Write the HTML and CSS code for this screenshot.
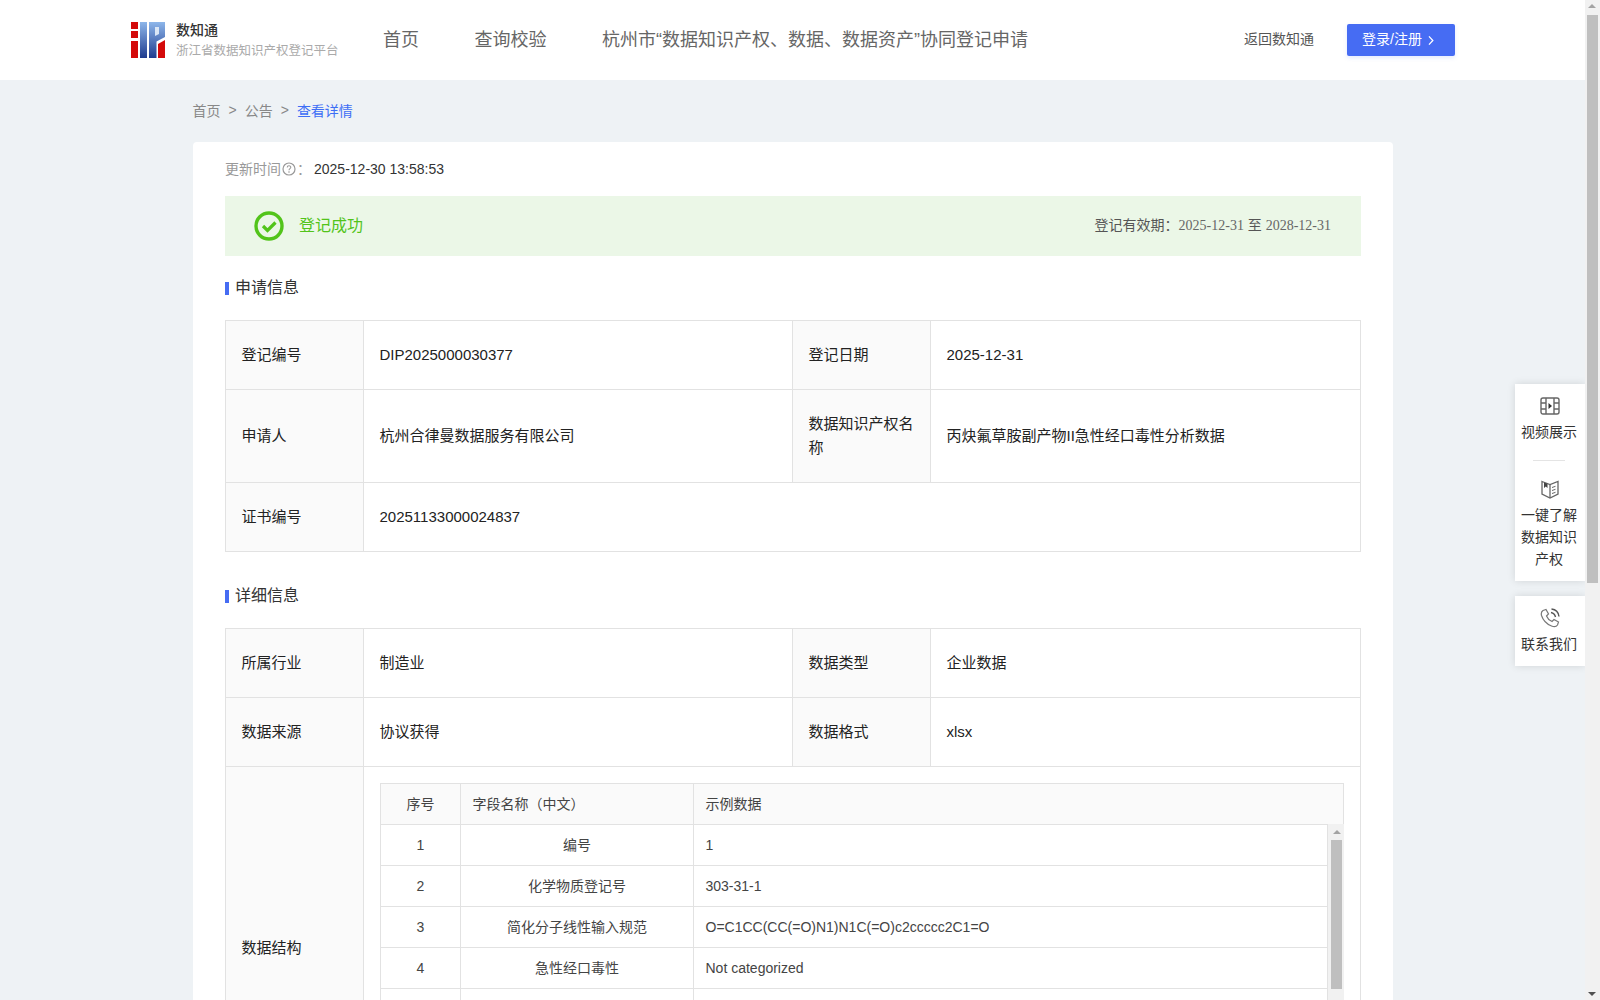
FILE: index.html
```html
<!DOCTYPE html>
<html lang="zh-CN">
<head>
    <meta charset="UTF-8">
    <title>查看详情 - 数知通</title>
    <link rel="stylesheet" href="styles.css">
</head>
<body>
    <div class="page">
        <header class="topbar">
            <div class="brand">
                <svg class="logo" viewBox="0 0 34 36" width="34" height="36">
                    <defs>
                        <linearGradient id="logoBlue" x1="0" y1="0" x2="0" y2="1">
                            <stop offset="0" stop-color="#8db6ea"/>
                            <stop offset="1" stop-color="#1f3c8f"/>
                        </linearGradient>
                    </defs>
                    <rect x="0" y="0" width="7" height="7" fill="#d40a0a"/>
                    <rect x="0" y="9" width="7" height="7" fill="#d40a0a"/>
                    <rect x="0" y="19" width="7" height="17" fill="#d40a0a"/>
                    <rect x="9" y="0" width="7" height="36" fill="url(#logoBlue)"/>
                    <path d="M18 0H34V15L25.5 19.5V36H18Z" fill="url(#logoBlue)"/>
                    <path d="M24 5V14L28 12V5Z" fill="#dbe7f6"/>
                    <path d="M27 22L34 18V36H27Z" fill="#d40a0a"/>
                </svg>
                <div class="brand-text">
                    <div class="brand-name">数知通</div>
                    <div class="brand-sub">浙江省数据知识产权登记平台</div>
                </div>
            </div>
            <nav class="nav">
                <a>首页</a>
                <a>查询校验</a>
                <a>杭州市“数据知识产权、数据、数据资产”协同登记申请</a>
            </nav>
            <a class="back-link">返回数知通</a>
            <button class="login-btn">登录/注册
                <svg viewBox="0 0 6 12" width="6" height="11"><path d="M.8 1.5L5 6L.8 10.5" fill="none" stroke="#fff" stroke-width="1.4"/></svg>
            </button>
        </header>

        <main class="content">
            <div class="breadcrumb">
                <span>首页</span><i>&gt;</i><span>公告</span><i>&gt;</i><span class="current">查看详情</span>
            </div>

            <section class="card">
                <div class="update-time">
                    <span class="label">更新时间</span>
                    <svg viewBox="0 0 14 14" width="14" height="14"><circle cx="7" cy="7" r="6" fill="none" stroke="#999" stroke-width="1.2"/><path d="M5.2 5.4C5.2 3.2 8.8 3.2 8.8 5.3C8.8 6.6 7 6.6 7 8.2" fill="none" stroke="#999" stroke-width="1.1"/><circle cx="7" cy="10" r=".8" fill="#999"/></svg>
                    <span class="label">：</span>
                    <span class="time">2025-12-30 13:58:53</span>
                </div>

                <div class="status">
                    <svg viewBox="0 0 30 30" width="30" height="30"><circle cx="15" cy="15" r="13" fill="none" stroke="#52c41a" stroke-width="3.4"/><path d="M9 15L13.5 19.5L21.5 11.5" fill="none" stroke="#52c41a" stroke-width="3.2"/></svg>
                    <span class="status-text">登记成功</span>
                    <span class="status-period">登记有效期：<em>2025-12-31</em> 至 <em>2028-12-31</em></span>
                </div>

                <h3 class="sec-title">申请信息</h3>
                <table class="info">
                    <colgroup><col class="c1"><col class="c2"><col class="c3"><col class="c4"></colgroup>
                    <tr>
                        <th>登记编号</th><td>DIP2025000030377</td>
                        <th>登记日期</th><td>2025-12-31</td>
                    </tr>
                    <tr>
                        <th>申请人</th><td>杭州合律曼数据服务有限公司</td>
                        <th>数据知识产权名称</th><td>丙炔氟草胺副产物II急性经口毒性分析数据</td>
                    </tr>
                    <tr>
                        <th>证书编号</th><td colspan="3">20251133000024837</td>
                    </tr>
                </table>

                <h3 class="sec-title">详细信息</h3>
                <table class="info">
                    <colgroup><col class="c1"><col class="c2"><col class="c3"><col class="c4"></colgroup>
                    <tr>
                        <th>所属行业</th><td>制造业</td>
                        <th>数据类型</th><td>企业数据</td>
                    </tr>
                    <tr>
                        <th>数据来源</th><td>协议获得</td>
                        <th>数据格式</th><td>xlsx</td>
                    </tr>
                    <tr>
                        <th>数据结构</th>
                        <td colspan="3" class="struct-cell">
                            <table class="fields fields-head">
                                <colgroup><col class="f1"><col class="f2"><col></colgroup>
                                <tr><th>序号</th><th>字段名称（中文）</th><th>示例数据</th></tr>
                            </table>
                            <div class="fields-body">
                                <table class="fields">
                                    <colgroup><col class="f1"><col class="f2"><col></colgroup>
                                    <tr><td class="mid">1</td><td class="mid">编号</td><td>1</td></tr>
                                    <tr><td class="mid">2</td><td class="mid">化学物质登记号</td><td>303-31-1</td></tr>
                                    <tr><td class="mid">3</td><td class="mid">简化分子线性输入规范</td><td>O=C1CC(CC(=O)N1)N1C(=O)c2ccccc2C1=O</td></tr>
                                    <tr><td class="mid">4</td><td class="mid">急性经口毒性</td><td>Not categorized</td></tr>
                                    <tr><td class="mid"></td><td class="mid"></td><td></td></tr>
                                </table>
                                <div class="mini-scroll">
                                    <span class="arrow-up"></span>
                                    <span class="mini-thumb"></span>
                                </div>
                            </div>
                        </td>
                    </tr>
                </table>
            </section>

            <aside class="float-tools">
                <div class="tool-box">
                    <div class="tool">
                        <svg viewBox="0 0 20 20" width="20" height="20" fill="none" stroke="#666" stroke-width="1.4">
                            <rect x="1" y="2" width="18" height="16" rx="2"/>
                            <path d="M6 2V18M14 2V18M1 7H6M1 13H6M14 7H19M14 13H19"/>
                            <path d="M8.5 7L12 10L8.5 13Z" fill="#333" stroke="none"/>
                        </svg>
                        <span>视频展示</span>
                    </div>
                    <div class="tool-line"></div>
                    <div class="tool">
                        <svg viewBox="0 0 20 20" width="20" height="20" fill="none" stroke="#666" stroke-width="1.3">
                            <path d="M2 2.5L10 5.5L18 2.5V15L10 19L2 15Z"/>
                            <path d="M10 5.5V19"/>
                            <path d="M4 3.5V9L5.8 7.6L7.5 9V4.8Z" fill="#444" stroke="none"/>
                            <path d="M12 8.5L15.5 7.3M12 11.5L15.5 10.3M12 14.5L15.5 13.3" stroke-width="1"/>
                        </svg>
                        <span>一键了解数据知识产权</span>
                    </div>
                </div>
                <div class="tool-box">
                    <div class="tool">
                        <svg viewBox="0 0 20 20" width="20" height="20" fill="none" stroke="#777" stroke-width="1.2">
                            <path d="M3 2.5L6 1.5L8.5 6L6.5 8C7.5 10.5 9.5 12.5 12 13.5L14 11.5L18.5 14L17.5 17C16.5 18.5 14 19 11.5 18C6.5 16 3 12 1.5 7.5C1 5.5 1.5 3.5 3 2.5Z"/>
                            <path d="M11 4.5C13.5 5 15 6.5 15.5 9M11.5 1C15.5 1.5 18.5 4.5 19 8.5" stroke="#555" stroke-width="1.4"/>
                        </svg>
                        <span>联系我们</span>
                    </div>
                </div>
            </aside>
        </main>

        <div class="page-scroll">
            <span class="page-up"></span>
            <span class="page-thumb"></span>
            <span class="page-down"></span>
        </div>
    </div>
</body>
</html>
```
FILE: styles.css
```css
* {
    box-sizing: border-box;
}
html, body {
    margin: 0;
    height: 100%;
    overflow: hidden;
}
body {
    font-family: "Liberation Sans", "Noto Sans CJK SC", sans-serif;
    font-size: 14px;
    color: #333;
    background: #eef2f5;
}
.page {
    display: grid;
    grid-template-columns: 1fr 15px;
    grid-template-rows: 80px 920px;
    height: 1000px;
    overflow: hidden;
}
.topbar {
    display: flex;
    align-items: center;
    background: #fff;
    padding-left: 131px;
    padding-right: 130px;
}
.brand {
    display: flex;
    align-items: center;
    width: 252px;
}
.logo {
    margin-right: 11px;
}
.brand-text {
    padding-top: 1px;
}
.brand-name {
    font-size: 14px;
    line-height: 20px;
    font-weight: 500;
    color: #333;
}
.brand-sub {
    margin-top: 1px;
    font-size: 12.5px;
    line-height: 20px;
    color: #aaa;
}
.nav {
    display: flex;
    gap: 55.5px;
    flex: 1;
    margin-top: -4px;
    font-size: 18px;
    color: #666;
}
.back-link {
    margin-top: -4px;
    margin-right: 33px;
    font-size: 14px;
    color: #555;
}
.login-btn {
    display: flex;
    align-items: center;
    justify-content: center;
    gap: 6px;
    width: 108px;
    height: 32px;
    border: none;
    border-radius: 2px;
    padding: 0 6px 4px 0;
    background: #466cf3;
    color: #fff;
    font-family: inherit;
    font-size: 14px;
    box-shadow: 0 2px 4px rgba(70, 108, 243, 0.15);
}
.login-btn svg {
    margin-top: 4px;
}
.content {
    grid-column: 1;
    grid-row: 2;
    padding: 0 192px 0 193px;
    overflow: hidden;
    position: relative;
}
.breadcrumb {
    display: flex;
    align-items: center;
    height: 62px;
    padding-bottom: 2px;
    margin-left: -0.5px;
    font-size: 14px;
    color: #888;
}
.breadcrumb i {
    font-style: normal;
    margin: 0 8px;
}
.breadcrumb .current {
    color: #3d6ef5;
}
.card {
    background: #fff;
    border-radius: 4px 4px 0 0;
    padding: 0 32px;
}
.update-time {
    display: flex;
    align-items: center;
    height: 54px;
    gap: 1px;
}
.update-time .label {
    margin-top: -3px;
    color: #999;
}
.update-time .time {
    margin-left: 2px;
}
.status {
    display: flex;
    align-items: center;
    height: 60px;
    padding: 0 30px 0 29px;
    background: #ebf7e7;
}
.status-text {
    margin-left: 15px;
    margin-top: -5px;
    font-size: 16px;
    color: #52c41a;
    flex: 1;
}
.status-period {
    margin-top: -5px;
    font-size: 14px;
    color: #555;
}
.status-period em {
    font-family: "Liberation Serif", serif;
    font-style: normal;
    color: #666;
}
.sec-title {
    position: relative;
    margin: 0;
    height: 64px;
    padding: 21px 0 0 10px;
    font-size: 16px;
    font-weight: 400;
    line-height: 22px;
    color: #333;
}
.sec-title::before {
    content: "";
    position: absolute;
    left: 0;
    top: 26px;
    width: 4px;
    height: 13px;
    background: #466cf3;
}
.info {
    width: 1136px;
    table-layout: fixed;
    border-collapse: collapse;
    margin-bottom: 12px;
}
.c1, .c3 {
    width: 138px;
}
.c2 {
    width: 429px;
}
.info > tbody > tr > th,
.info > tbody > tr > td {
    border: 1px solid #e2e2e2;
    padding: 22px 15.5px;
    font-size: 15px;
    font-weight: 400;
    line-height: 24px;
    color: #222;
    text-align: left;
}
.info > tbody > tr > th {
    background: #fafafa;
}
.info > tbody > tr > td.struct-cell {
    padding: 16px 16px 16px;
}
.fields {
    width: 100%;
    table-layout: fixed;
    border-collapse: collapse;
}
.f1 {
    width: 80px;
}
.f2 {
    width: 233px;
}
.fields th, .fields td {
    height: 41px;
    border: 1px solid #e2e2e2;
    padding: 0 11.5px;
    font-size: 14px;
    font-weight: 400;
    color: #444;
    text-align: left;
}
.fields-head th {
    background: #fafafa;
}
.fields-head th:first-child {
    text-align: center;
}
.fields .mid {
    text-align: center;
}
.fields-body {
    display: flex;
    height: 288px;
    overflow: hidden;
    margin-top: -1px;
}
.fields-body .fields {
    flex: 1;
    align-self: flex-start;
}
.mini-scroll {
    flex: none;
    width: 16px;
    background: #f1f1f1;
    padding: 0 2px 0 3px;
}
.arrow-up {
    display: block;
    width: 0;
    margin: 6px auto;
    border: 4px solid transparent;
    border-top: 0;
    border-bottom: 4px solid #a3a3a3;
}
.mini-thumb {
    display: block;
    height: 149px;
    background: #bfbfbf;
}
.float-tools {
    position: absolute;
    right: 0;
    top: 304px;
    display: flex;
    flex-direction: column;
    gap: 15px;
    width: 70px;
}
.tool-box {
    background: #fff;
    box-shadow: 0 0 8px rgba(0, 0, 0, 0.12);
    padding: 12px 7px 11px 5px;
}
.tool {
    display: flex;
    flex-direction: column;
    align-items: center;
    text-align: center;
    font-size: 14px;
    line-height: 22px;
    color: #333;
}
.tool svg {
    margin: 0 0 5px 2px;
}
.tool-line {
    width: 32px;
    height: 1px;
    margin: 17px auto 18px;
    background: #e4e4e4;
}
.page-scroll {
    grid-column: 2;
    grid-row: 1 / 3;
    position: relative;
    background: #f1f1f1;
    padding: 15px 2px 0;
}
.page-thumb {
    display: block;
    height: 568px;
    background: #bfbfbf;
}
.page-up, .page-down {
    position: absolute;
    left: 3px;
    width: 0;
    border: 4px solid transparent;
}
.page-up {
    top: 4px;
    border-top: 0;
    border-bottom: 4px solid #a3a3a3;
}
.page-down {
    bottom: 4px;
    border-bottom: 0;
    border-top: 4px solid #505050;
}
```
